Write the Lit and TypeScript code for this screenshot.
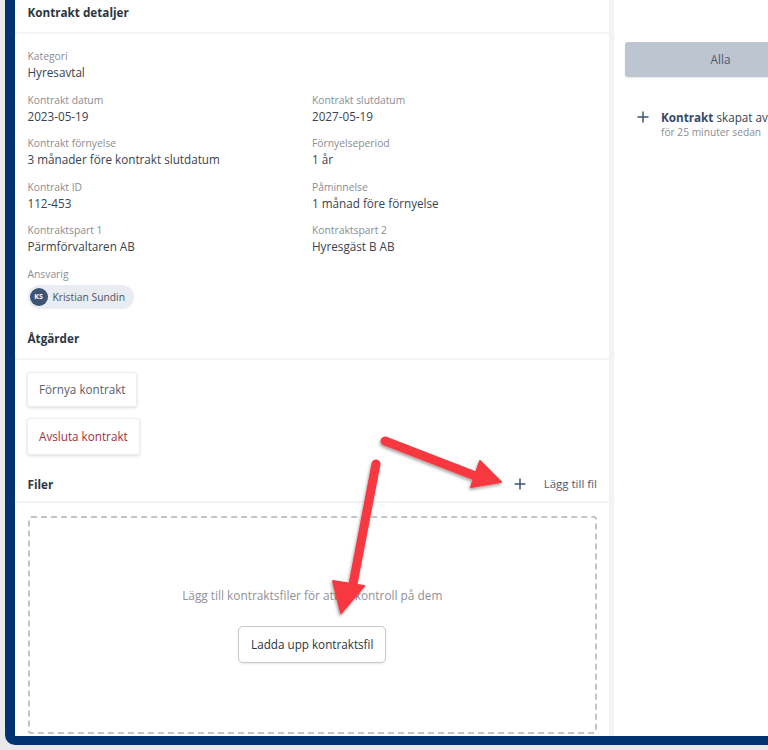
import { LitElement, html, css, svg } from "lit";
import { customElement } from "lit/decorators.js";

const plus = html`<svg class="plus" width="12" height="12" viewBox="0 0 12 12"><path d="M6 .5v11M.5 6h11" stroke="#3d5375" stroke-width="1.5" fill="none"/></svg>`;

@customElement("app-root")
export class AppRoot extends LitElement {
  static styles = css`
    :host { display: block; width: 768px; height: 750px; overflow: hidden; position: relative; background: #e9e9eb; font-family: "Open Sans", sans-serif; color: #3a4350; }
    .frame { box-sizing: border-box; height: 745px; margin-left: 5px; border-left: 10px solid #02326f; border-bottom: 9px solid #02326f; border-bottom-left-radius: 10px; background: #f3f3f4; display: flex; gap: 5px; }
    .left { width: 594px; flex: none; background: #fff; display: flex; flex-direction: column; }
    .right { flex: 1; background: #fff; padding: 42px 0 0 11px; overflow: hidden; }
    .head { height: 33px; box-sizing: border-box; padding: 0 12px 0 12.5px; border-bottom: 2px solid #f3f3f5; display: flex; align-items: center; justify-content: space-between; font-size: 11.7px; font-weight: 700; color: #2c3542; flex: none; }
    .head.top { height: 34px; padding-bottom: 8px; }
    .grid { display: grid; grid-template-columns: 284.5px 1fr; padding: 14px 12.5px 0; row-gap: 11.6px; }
    .full { grid-column: 1 / -1; }
    .lab { font-size: 10.3px; line-height: 16px; color: #8a8d93; }
    .val { font-size: 11.7px; line-height: 16px; color: #3a4350; }
    .chip { display: inline-flex; align-items: center; gap: 5px; height: 24px; width: 106px; box-sizing: border-box; margin: 3px 0 0 0.5px; padding-left: 1.5px; background: #e9ecf0; border-radius: 12px; font-size: 10.3px; color: #4b5361; }
    .av { width: 18px; height: 18px; border-radius: 50%; background: #3d5475; color: #fff; font-size: 7px; font-weight: 700; display: flex; align-items: center; justify-content: center; }
    .actions { padding: 12px 12px 0; display: flex; flex-direction: column; align-items: flex-start; gap: 11px; }
    .btn { box-sizing: border-box; height: 35px; padding: 0 11px; display: flex; align-items: center; background: #fff; border: 1px solid #eeeeef; border-radius: 3px; box-shadow: 0 1px 3px rgba(0,0,0,.14); font-size: 11.7px; color: #59616c; }
    .btn.red { height: 37px; color: #a5303f; }
    .section { margin-top: 17px; height: 34px; padding-bottom: 8px; }
    .sec2 { margin-top: 12px; height: 36px; }
    .add { display: flex; align-items: center; font-weight: 400; font-size: 11.5px; color: #4f5a72; }
    .plus { display: block; flex: none; }
    .add .plus { margin-right: 18px; }
    .drop { margin: 13px 12px 0 12.5px; height: 218px; box-sizing: border-box; border: 2px dashed #c4c4c6; border-radius: 3px; display: flex; flex-direction: column; align-items: center; padding-top: 68px; }
    .hint { font-size: 11.85px; line-height: 18px; color: #8f9298; }
    .upload { margin-top: 22px; height: 37px; box-sizing: border-box; padding: 0 12px; display: flex; align-items: center; border: 1px solid #c9c9cc; border-radius: 5px; box-shadow: 0 1px 2px rgba(0,0,0,.1); background: #fff; font-size: 11.7px; color: #2c3542; }
    .alla { height: 35px; box-sizing: border-box; padding-bottom: 1px; border-radius: 3px; background: #bcc5d0; box-shadow: 0 1px 2px rgba(0,0,0,.1); display: flex; align-items: center; justify-content: center; width: 191px; font-size: 11.7px; color: #4c5a6e; }
    .event { display: flex; margin: 32px 0 0 12px; gap: 12px; white-space: nowrap; }
    .event .plus { margin-top: 2px; }
    .t1 { font-size: 11.7px; line-height: 16px; color: #3a4350; }
    .t1 b { color: #36496a; }
    .t2 { font-size: 10.2px; line-height: 14px; color: #8a8d93; }
    .arrows { position: absolute; left: 0; top: 0; pointer-events: none; }
  `;

  private item(l: string, v: string, full = false) {
    return html`<div class=${full ? "full" : ""}><div class="lab">${l}</div><div class="val">${v}</div></div>`;
  }

  render() {
    return html`
      <div class="frame">
        <div class="left">
          <div class="head top">Kontrakt detaljer</div>
          <div class="grid">
            ${this.item("Kategori", "Hyresavtal", true)}
            ${this.item("Kontrakt datum", "2023-05-19")}
            ${this.item("Kontrakt slutdatum", "2027-05-19")}
            ${this.item("Kontrakt förnyelse", "3 månader före kontrakt slutdatum")}
            ${this.item("Förnyelseperiod", "1 år")}
            ${this.item("Kontrakt ID", "112-453")}
            ${this.item("Påminnelse", "1 månad före förnyelse")}
            ${this.item("Kontraktspart 1", "Pärmförvaltaren AB")}
            ${this.item("Kontraktspart 2", "Hyresgäst B AB")}
            <div class="full">
              <div class="lab">Ansvarig</div>
              <div class="chip"><span class="av">KS</span>Kristian Sundin</div>
            </div>
          </div>
          <div class="head section">Åtgärder</div>
          <div class="actions">
            <div class="btn">Förnya kontrakt</div>
            <div class="btn red">Avsluta kontrakt</div>
          </div>
          <div class="head sec2">Filer<span class="add">${plus}Lägg till fil</span></div>
          <div class="drop">
            <div class="hint">Lägg till kontraktsfiler för att få kontroll på dem</div>
            <div class="upload">Ladda upp kontraktsfil</div>
          </div>
        </div>
        <div class="right">
          <div class="alla">Alla</div>
          <div class="event">${plus}<div>
            <div class="t1"><b>Kontrakt</b> skapat av</div>
            <div class="t2">för 25 minuter sedan</div>
          </div></div>
        </div>
      </div>
      <svg class="arrows" width="768" height="750" viewBox="0 0 768 750">
        <defs><filter id="s" x="-20%" y="-20%" width="140%" height="140%"><feDropShadow dx="-1" dy="2" stdDeviation="1.5" flood-color="#000" flood-opacity=".35"/></filter></defs>
        <g filter="url(#s)">
          ${svg`<path d="M385 441 L478 477" stroke="#f7393f" stroke-width="9" stroke-linecap="round" fill="none"/>
          <path d="M501 482 L471 487 L480 461 Z" fill="#f7393f" stroke="#f7393f" stroke-width="2" stroke-linejoin="round"/>
          <path d="M376 464 L353 584" stroke="#f7393f" stroke-width="9" stroke-linecap="round" fill="none"/>
          <path d="M341 613 L333 581 L364 586 Z" fill="#f7393f" stroke="#f7393f" stroke-width="2" stroke-linejoin="round"/>`}
        </g>
      </svg>
    `;
  }
}
